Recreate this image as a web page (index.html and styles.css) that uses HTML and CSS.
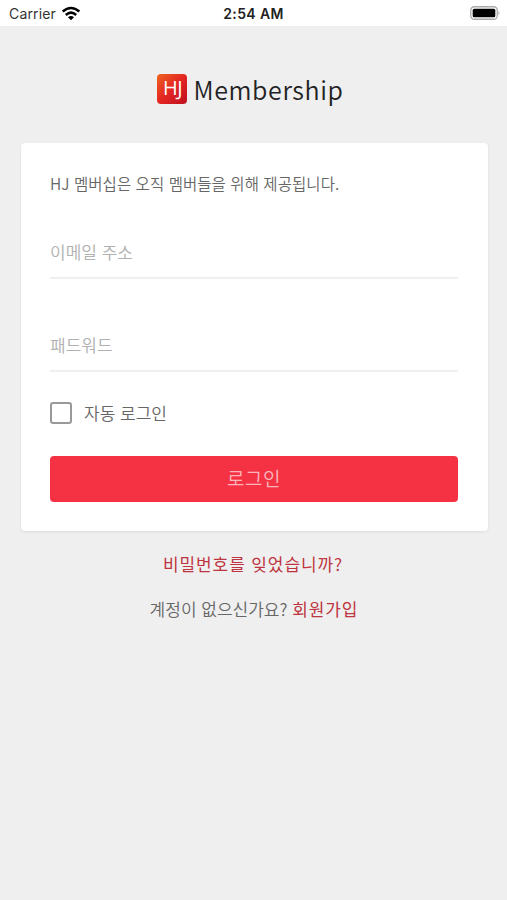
FILE: index.html
```html
<!DOCTYPE html>
<html lang="ko">
<head>
    <meta charset="UTF-8">
    <meta name="viewport" content="width=device-width, initial-scale=1.0">
    <title>HJ Membership</title>
    <link rel="stylesheet" href="styles.css">
</head>
<body>
    <header class="status-bar">
        <div class="carrier">
            <span>Carrier</span>
            <svg class="wifi" width="20" height="15" viewBox="0 0 20 15">
                <g fill="none" stroke="#000" stroke-width="2.6">
                    <path d="M1.7 5.6Q10 -1.6 18.3 5.6"/>
                    <path d="M4.8 8.9Q10 4.5 15.2 8.9"/>
                </g>
                <path d="M7 11.2Q10 8.8 13 11.2L10 14.3Z"/>
            </svg>
        </div>
        <div class="time">2:54 AM</div>
        <svg class="battery" width="31" height="14" viewBox="0 0 31 14">
            <rect x="0.75" y="0.75" width="26.5" height="12.5" rx="3.5" fill="#fff" stroke="#aaa" stroke-width="1.3"/>
            <rect x="2.7" y="2.7" width="22.6" height="8.6" rx="1.5"/>
            <path d="M28.5 4.7Q30.5 7 28.5 9.3Z" fill="#aaa"/>
        </svg>
    </header>
    <main class="page">
        <div class="brand">
            <span class="logo">HJ</span>
            <h1>Membership</h1>
        </div>
        <form class="card">
            <p class="intro">HJ 멤버십은 오직 멤버들을 위해 제공됩니다.</p>
            <input class="field" type="email" placeholder="이메일 주소">
            <input class="field" type="password" placeholder="패드워드">
            <label class="remember">
                <input type="checkbox">
                <span>자동 로그인</span>
            </label>
            <button class="login" type="button">로그인</button>
        </form>
        <a class="forgot" href="#">비밀번호를 잊었습니까?</a>
        <p class="signup">계정이 없으신가요? <a href="#">회원가입</a></p>
    </main>
</body>
</html>
```

FILE: styles.css
```css
* {
    box-sizing: border-box;
}
body {
    margin: 0;
    min-height: 100vh;
    background-color: #efefef;
    font-family: 'Noto Sans CJK KR', sans-serif;
    font-weight: 350;
    color: #666;
}
a {
    color: #bd3540;
    font-weight: 400;
    text-decoration: none;
}
.status-bar {
    display: grid;
    grid-template-columns: 1fr auto 1fr;
    align-items: center;
    height: 26px;
    padding: 0 6px 0 9px;
    background-color: #fff;
    color: #222;
    font-family: 'Inter', sans-serif;
    font-size: 14px;
    font-weight: 400;
}
.carrier {
    display: flex;
    align-items: center;
    gap: 5px;
    color: #333;
    letter-spacing: 0.15px;
}
.time {
    margin-left: -3px;
    font-weight: 600;
    letter-spacing: 0.35px;
}
.battery {
    justify-self: end;
}
.page {
    display: flex;
    flex-direction: column;
    align-items: center;
    padding: 46px 19px 0 21px;
}
.brand {
    display: flex;
    align-items: center;
    gap: 6px;
    height: 34px;
    margin: 0 8px 37px 0;
}
.logo {
    width: 30px;
    height: 30px;
    border-radius: 4px;
    background: linear-gradient(135deg, #ee6420, #e32622 50%, #be1020);
    color: #fff;
    font-family: 'Open Sans', sans-serif;
    font-size: 20px;
    font-weight: 400;
    line-height: 28px;
    letter-spacing: -0.5px;
    text-align: center;
}
.brand h1 {
    margin: 0;
    color: #222;
    font-size: 25px;
    font-weight: 350;
    line-height: 34px;
    letter-spacing: 0.6px;
}
.card {
    display: flex;
    flex-direction: column;
    width: 100%;
    height: 388px;
    padding: 29px 30px 0 29px;
    background-color: #fff;
    border-radius: 4px;
    box-shadow: 0 1px 3px rgba(0, 0, 0, 0.08);
}
.intro {
    margin: 0 0 31px;
    font-size: 15.5px;
    line-height: 23px;
    letter-spacing: 0.06px;
}
.field {
    height: 53px;
    margin-bottom: 40px;
    padding: 0;
    border: none;
    border-bottom: 2px solid #f0f0f0;
    outline: none;
    background: none;
    font-family: inherit;
    font-size: 17px;
    font-weight: 350;
}
.field::placeholder {
    color: #b0b0b0;
}
.field + .field {
    margin-bottom: 28px;
}
.remember {
    display: flex;
    align-items: center;
    gap: 12px;
    height: 26px;
    margin-bottom: 30px;
    font-size: 17px;
}
.remember span {
    padding-bottom: 2px;
}
.remember input {
    appearance: none;
    width: 22px;
    height: 22px;
    margin: 0;
    border: 2px solid #999;
    border-radius: 3px;
}
.login {
    height: 46px;
    padding: 0 0 3px;
    border: none;
    border-radius: 4px;
    background-color: #f53244;
    color: #fbb4bb;
    font-family: inherit;
    font-size: 19px;
    font-weight: 350;
    letter-spacing: 0.5px;
}
.forgot {
    margin: 20px 3px 0 0;
    font-size: 17px;
    line-height: 26px;
    letter-spacing: 0.9px;
}
.signup {
    margin: 19px 1px 0 0;
    font-size: 17px;
    line-height: 26px;
}
.signup a {
    letter-spacing: 0.9px;
}
```
